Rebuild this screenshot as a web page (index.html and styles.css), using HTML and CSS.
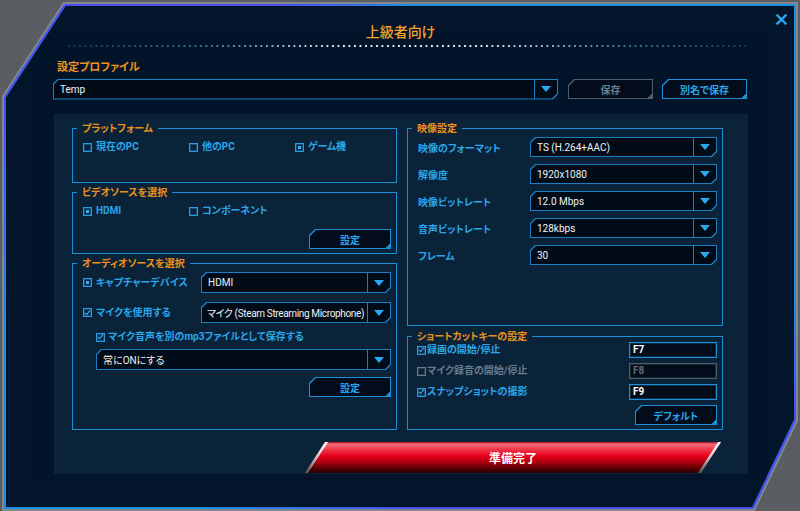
FILE: index.html
```html
<!DOCTYPE html>
<html lang="ja">
<head>
    <meta charset="UTF-8">
    <meta name="viewport" content="width=device-width, initial-scale=1.0">
    <title>上級者向け</title>
    <link rel="stylesheet" href="styles.css">
</head>
<body>

<div class="window">
    <!-- window frame: chamfered outline, drawn once behind everything -->
    <svg class="frame" width="800" height="511" viewBox="0 0 800 511">
        <defs>
            <linearGradient id="edgeLeft" gradientUnits="userSpaceOnUse" x1="0" y1="97" x2="0" y2="330">
                <stop offset="0" stop-color="#4b4cef"/>
                <stop offset="1" stop-color="#1b8fe2"/>
            </linearGradient>
            <linearGradient id="edgeTop" gradientUnits="userSpaceOnUse" x1="65" y1="0" x2="420" y2="0">
                <stop offset="0" stop-color="#4b4cef"/>
                <stop offset="0.6" stop-color="#4b4cef"/>
                <stop offset="1" stop-color="#1b8fe2"/>
            </linearGradient>
            <linearGradient id="edgeRight" gradientUnits="userSpaceOnUse" x1="0" y1="300" x2="0" y2="420">
                <stop offset="0" stop-color="#1b8fe2"/>
                <stop offset="1" stop-color="#4b4cef"/>
            </linearGradient>
            <linearGradient id="edgeBottom" gradientUnits="userSpaceOnUse" x1="200" y1="0" x2="420" y2="0">
                <stop offset="0" stop-color="#1b8fe2"/>
                <stop offset="1" stop-color="#4b4cef"/>
            </linearGradient>
        </defs>
        <polygon points="65,5 795,5 795,420 753,508 5,508 5,97" fill="#03152a" stroke="rgba(180,186,196,0.45)" stroke-width="6"/>
        <polygon points="65,5 795,5 795,420 753,508 5,508 5,97" fill="#03152a" stroke="#1b8fe2" stroke-width="2"/>
        <polygon points="49,33 767,33 767,478 766,480 33,480 33,57" fill="#021429"/>
        <line x1="5" y1="97" x2="5" y2="330" stroke="url(#edgeLeft)" stroke-width="2"/>
        <line x1="5" y1="97" x2="65" y2="5" stroke="#4b4cef" stroke-width="2"/>
        <line x1="65" y1="5" x2="420" y2="5" stroke="url(#edgeTop)" stroke-width="2"/>
        <line x1="795" y1="300" x2="795" y2="420" stroke="url(#edgeRight)" stroke-width="2"/>
        <line x1="795" y1="420" x2="753" y2="508" stroke="#4b4cef" stroke-width="2"/>
        <line x1="753" y1="508" x2="200" y2="508" stroke="url(#edgeBottom)" stroke-width="2"/>
    </svg>

    <div class="content">
        <h1 class="title">上級者向け</h1>
        <div class="dots"></div>

        <!-- profile -->
        <div class="profile-label">設定プロファイル</div>
        <div class="profile-row">
            <div class="combo combo-profile"><span class="combo-value">Temp</span><span class="combo-arrow"></span></div>
            <div class="btn btn-profile btn-disabled"><span>保存</span></div>
            <div class="btn btn-profile"><span>別名で保存</span></div>
        </div>

        <div class="panel">
            <div class="columns">
                <!-- left column -->
                <div class="col">
                    <div class="group g-platform">
                        <div class="group-title">プラットフォーム</div>
                        <div class="chk-row">
                            <label class="chk-item"><span class="chk"></span>現在のPC</label>
                            <label class="chk-item"><span class="chk"></span>他のPC</label>
                            <label class="chk-item"><span class="chk on"></span>ゲーム機</label>
                        </div>
                    </div>

                    <div class="group g-video">
                        <div class="group-title">ビデオソースを選択</div>
                        <div class="chk-row">
                            <label class="chk-item"><span class="chk on"></span>HDMI</label>
                            <label class="chk-item"><span class="chk"></span>コンポーネント</label>
                        </div>
                        <div class="btn btn-set"><span>設定</span></div>
                    </div>

                    <div class="group g-audio">
                        <div class="group-title">オーディオソースを選択</div>
                        <div class="audio-row">
                            <label class="chk-item"><span class="chk on"></span>キャプチャーデバイス</label>
                            <div class="combo"><span class="combo-value">HDMI</span><span class="combo-arrow"></span></div>
                        </div>
                        <div class="audio-row">
                            <label class="chk-item"><span class="chk checked"></span>マイクを使用する</label>
                            <div class="combo"><span class="combo-value tight">マイク (Steam Streaming Microphone)</span><span class="combo-arrow"></span></div>
                        </div>
                        <label class="chk-item sub-check"><span class="chk checked"></span>マイク音声を別のmp3ファイルとして保存する</label>
                        <div class="combo sub-combo"><span class="combo-value">常にONにする</span><span class="combo-arrow"></span></div>
                        <div class="btn btn-set"><span>設定</span></div>
                    </div>
                </div>

                <!-- right column -->
                <div class="col">
                    <div class="group g-settings">
                        <div class="group-title">映像設定</div>
                        <div class="vrow">
                            <span class="vlabel">映像のフォーマット</span>
                            <div class="combo"><span class="combo-value">TS (H.264+AAC)</span><span class="combo-arrow"></span></div>
                        </div>
                        <div class="vrow">
                            <span class="vlabel">解像度</span>
                            <div class="combo"><span class="combo-value">1920x1080</span><span class="combo-arrow"></span></div>
                        </div>
                        <div class="vrow">
                            <span class="vlabel">映像ビットレート</span>
                            <div class="combo"><span class="combo-value">12.0 Mbps</span><span class="combo-arrow"></span></div>
                        </div>
                        <div class="vrow">
                            <span class="vlabel">音声ビットレート</span>
                            <div class="combo"><span class="combo-value">128kbps</span><span class="combo-arrow"></span></div>
                        </div>
                        <div class="vrow">
                            <span class="vlabel">フレーム</span>
                            <div class="combo"><span class="combo-value">30</span><span class="combo-arrow"></span></div>
                        </div>
                    </div>

                    <div class="group g-shortcut">
                        <div class="group-title">ショートカットキーの設定</div>
                        <div class="krow">
                            <label class="chk-item"><span class="chk checked"></span>録画の開始/停止</label>
                            <span class="key">F7</span>
                        </div>
                        <div class="krow disabled">
                            <label class="chk-item"><span class="chk"></span>マイク録音の開始/停止</label>
                            <span class="key">F8</span>
                        </div>
                        <div class="krow">
                            <label class="chk-item"><span class="chk checked"></span>スナップショットの撮影</label>
                            <span class="key">F9</span>
                        </div>
                        <div class="btn btn-default"><span>デフォルト</span></div>
                    </div>
                </div>
            </div>

            <div class="footer">
                <div class="ready"><span>準備完了</span></div>
            </div>
        </div>
    </div>

    <!-- close button in the corner -->
    <svg class="close" width="11" height="11" viewBox="0 0 11 11">
        <path d="M1.5 1.5l8 8M9.5 1.5l-8 8" stroke="#2aa8ee" stroke-width="2.4" stroke-linecap="square"/>
    </svg>
</div>

</body>
</html>
```

FILE: styles.css
```css
body {
    margin: 0;
    background: #5a5e62;
    font-family: Roboto, "Noto Sans CJK JP", sans-serif;
    font-size: 10px;
    color: #eef2f5;
    font-feature-settings: "palt";
}

.window { position: relative; width: 800px; height: 511px; overflow: hidden; }
.frame { position: absolute; left: 0; top: 0; }
.close { position: absolute; left: 776px; top: 14px; }

.content { position: relative; width: 695px; margin-left: 53px; padding-top: 20px; }

.title {
    margin: 0;
    font-family: "Noto Sans CJK JP", sans-serif;
    font-size: 14px;
    line-height: 22px;
    font-weight: 500;
    text-align: center;
    color: #f4a22c;
}

/* dotted rule under the title */
.dots {
    height: 2px;
    margin: 3px -2px 0 15px;
    background: linear-gradient(90deg, #143a5c, #3f7099 20%, #e6eef5 40%, #e6eef5 60%, #3f7099 82%, #143a5c);
    -webkit-mask: radial-gradient(circle at 1px 1px, #000 1px, transparent 1.4px) 0 0 / 5.5px 2px repeat-x;
    mask: radial-gradient(circle at 1px 1px, #000 1px, transparent 1.4px) 0 0 / 5.5px 2px repeat-x;
}

.profile-label {
    margin-top: 14px;
    padding-left: 4px;
    font-size: 11px;
    line-height: 14px;
    font-weight: 700;
    color: #ee951e;
}

.profile-row { display: flex; align-items: center; height: 22px; margin-top: 3px; }
.combo-profile { width: 505px; height: 22px; }
.btn-profile { width: 85px; margin-left: 10px; }
.btn-profile + .btn-profile { margin-left: 9px; }

/* combo box: outer layer is the border colour, inner parts are the dark field */
.combo {
    display: flex;
    gap: 1px;
    padding: 1px;
    height: 21px;
    box-sizing: border-box;
    background: #1b7dc2;
    clip-path: polygon(5px 0, 100% 0, 100% calc(100% - 5px), calc(100% - 5px) 100%, 0 100%, 0 5px);
}
.combo-value {
    flex: 1;
    display: flex;
    align-items: center;
    padding-left: 6px;
    background: #020b18;
    white-space: nowrap;
    overflow: hidden;
    clip-path: polygon(5px 0, 100% 0, 100% 100%, 0 100%, 0 5px);
}
.combo-value.tight { padding-left: 5px; letter-spacing: -0.35px; }
.combo-arrow {
    width: 22px;
    display: flex;
    align-items: center;
    justify-content: center;
    background: #020b18;
    clip-path: polygon(0 0, 100% 0, 100% calc(100% - 5px), calc(100% - 5px) 100%, 0 100%);
}
.combo-arrow::after {
    content: "";
    border-left: 5px solid transparent;
    border-right: 5px solid transparent;
    border-top: 6px solid #2aa8f0;
}

/* chamfered push button */
.btn {
    height: 20px;
    box-sizing: border-box;
    padding: 1px;
    background: #1d8fd6;
    clip-path: polygon(6px 0, 100% 0, 100% 100%, 0 100%, 0 6px);
}
.btn span {
    display: flex;
    height: 100%;
    align-items: center;
    justify-content: center;
    background: linear-gradient(135deg, transparent calc(100% - 3px), #1d8fd6 0), #020c1a;
    clip-path: polygon(6px 0, 100% 0, 100% 100%, 0 100%, 0 6px);
    color: #2aa6ea;
    font-weight: 700;
}
.btn-disabled { background: #4f5d69; }
.btn-disabled span {
    background: linear-gradient(135deg, transparent calc(100% - 3px), #4f5d69 0), #020c1a;
    color: #6c7e8b;
}

.panel {
    width: 694px;
    height: 360px;
    box-sizing: border-box;
    margin: 14px 0 0 1px;
    padding: 14px 25px 0 18px;
    background: #0b2339;
}

.columns { display: grid; grid-template-columns: 325px 316px; column-gap: 10px; }
.col { display: flex; flex-direction: column; }

.group { position: relative; box-sizing: border-box; border: 1px solid #1d8fd6; }
.group-title {
    position: absolute;
    top: -7px;
    left: 4px;
    padding: 0 5px;
    background: #0b2339;
    color: #ea921c;
    font-weight: 700;
    line-height: 14px;
}

.chk-row { display: grid; grid-template-columns: repeat(3, 106px); }
.chk-item {
    display: flex;
    align-items: center;
    gap: 4px;
    line-height: 14px;
    color: #2aa6ea;
    font-weight: 700;
    white-space: nowrap;
}

.chk {
    position: relative;
    flex: none;
    width: 9px;
    height: 9px;
    box-sizing: border-box;
    border: 1px solid #2a9be2;
    box-shadow: inset 0 0 0 1px #124e78;
    display: flex;
    align-items: center;
    justify-content: center;
}
.chk.on::after { content: ""; width: 3px; height: 3px; background: #3ab0f5; }
.chk.checked::after {
    content: "";
    width: 2px;
    height: 5px;
    margin-top: -2px;
    border: solid #3ab0f5;
    border-width: 0 1.5px 1.5px 0;
    transform: rotate(40deg);
}

.g-platform { height: 55px; padding: 11px 10px 0; }

.g-video {
    height: 62px;
    margin-top: 9px;
    padding: 11px 5px 4px 10px;
    display: flex;
    flex-direction: column;
}
.g-video .btn-set { margin-top: auto; }
.btn-set { width: 82px; align-self: flex-end; }

.g-audio {
    height: 167px;
    margin-top: 9px;
    padding: 8px 5px 0 10px;
    display: flex;
    flex-direction: column;
}
.audio-row { display: flex; align-items: center; height: 21px; }
.audio-row + .audio-row { margin-top: 9px; }
.audio-row .chk-item { flex: 1; }
.audio-row .combo { width: 190px; }
.sub-check { margin: 7px 0 0 13px; gap: 3px; }
.sub-combo { margin: 5px 0 0 13px; }
.g-audio .btn-set { margin-top: 7px; }

.g-settings { height: 198px; padding: 8px 5px 0 10px; }
.vrow { display: flex; align-items: center; height: 20px; }
.vrow + .vrow { margin-top: 7px; }
.vlabel { width: 112px; color: #2aa6ea; font-weight: 700; }
.vrow .combo { width: 187px; height: 20px; }

.g-shortcut { height: 94px; margin-top: 10px; padding: 5px 5px 0 9px; display: flex; flex-direction: column; }
.krow { display: flex; align-items: center; height: 16px; }
.krow + .krow { margin-top: 5px; }
.krow .chk-item { flex: 1; gap: 1px; }
.key {
    width: 88px;
    height: 16px;
    box-sizing: border-box;
    padding-left: 3px;
    border: 1px solid #1d8fd6;
    box-shadow: inset 0 0 0 1px #0c2f4c;
    background: #020c1a;
    color: #fff;
    font-weight: 700;
    line-height: 14px;
}
.krow.disabled .chk-item { color: #6a7c88; }
.krow.disabled .chk { border-color: #6a7c88; box-shadow: inset 0 0 0 1px #2c3c48; }
.krow.disabled .key { border-color: #4f5d69; box-shadow: inset 0 0 0 1px #1c2a36; color: #5e6e7a; }
.btn-default { width: 82px; margin: 5px 0 0 auto; }

/* big red start button */
.footer { margin-top: 12px; }
.ready {
    position: relative;
    width: 396px;
    height: 31px;
    margin-left: 243px;
    transform: skewX(-33deg);
    background: linear-gradient(180deg, #b01828 0, #f36c7a 8%, #ef3c4c 22%, #e8001c 45%, #b6000f 62%, #640006 82%, #250000 100%);
    display: flex;
    align-items: center;
    justify-content: center;
}
.ready::before,
.ready::after {
    content: "";
    position: absolute;
    top: 0;
    bottom: 0;
    width: 3px;
    background: linear-gradient(180deg, #ffffff, #c8c8c8 50%, #505050);
}
.ready::before { left: 0; }
.ready::after { right: 0; }
.ready span {
    transform: skewX(33deg);
    font-family: "Noto Sans CJK JP", sans-serif;
    font-size: 12px;
    font-weight: 700;
    color: #fff;
}
```
